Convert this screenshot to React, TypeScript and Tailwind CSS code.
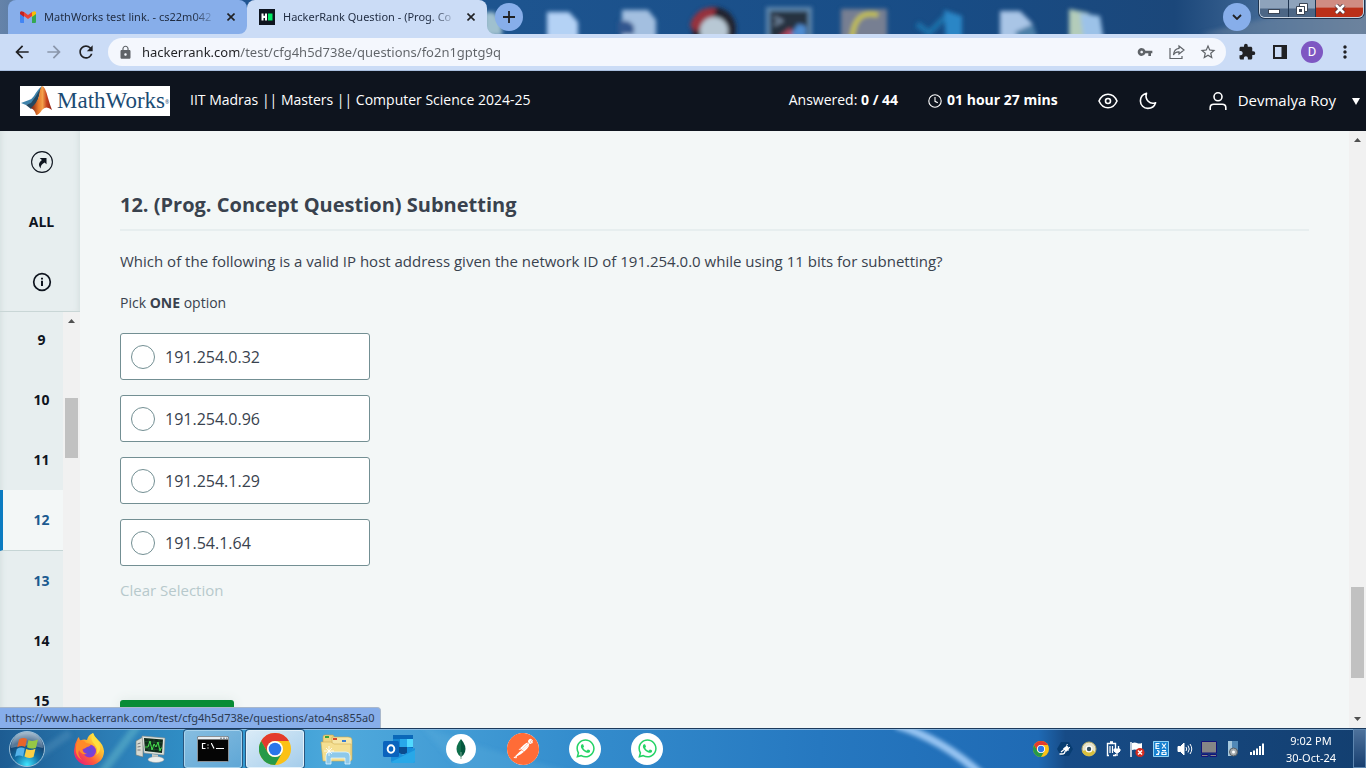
import React from "react";
import { MdVpnKey, MdStarBorder, MdExtension, MdLock, MdArrowBack, MdArrowForward, MdRefresh, MdMoreVert } from "react-icons/md";
import { SiPostman } from "react-icons/si";
import { FaWhatsapp } from "react-icons/fa";

function GmailIcon() {
  return (
    <svg viewBox="0 0 16 12" className="h-3 w-4 shrink-0">
      <path d="M1 12h3V5L0 2v9a1 1 0 0 0 1 1z" fill="#4285f4" />
      <path d="M12 12h3a1 1 0 0 0 1-1V2l-4 3z" fill="#34a853" />
      <path d="M4 5l4 3 4-3V1L8 4 4 1z" fill="#ea4335" />
      <path d="M0 2v1l4 3V1L2.4.4A1.6 1.6 0 0 0 0 2z" fill="#c5221f" />
      <path d="M16 2v1l-4 3V1l1.600-.6A1.600 1.600 0 0 1 16 2z" fill="#fbbc04" />
    </svg>
  );
}

function HackerRankIcon() {
  return (
    <svg viewBox="0 0 16 16" className="h-4 w-4 shrink-0">
      <rect width="16" height="16" fill="#0e141e" />
      <path d="M2.500 4.500h2v2.300h1.500V4.500h2v7H6V8.900H4.500v2.600h-2z" fill="#fff" />
      <rect x="9" y="4.500" width="4.500" height="7" fill="#00ea64" />
    </svg>
  );
}

function TabClose() {
  return (
    <svg viewBox="0 0 8 8" className="h-2 w-2">
      <path d="M.5.5l7 7M7.500.5l-7 7" stroke="#202124" strokeWidth="1.600" />
    </svg>
  );
}

function DesktopBackdrop() {
  return (
    <svg className="absolute inset-0 h-full w-full" viewBox="0 0 1366 34" preserveAspectRatio="none">
      <defs>
        <linearGradient id="sky">
          <stop offset="0" stopColor="#6583a9" />
          <stop offset=".1" stopColor="#215490" />
          <stop offset=".38" stopColor="#1d548f" />
          <stop offset=".7" stopColor="#184c85" />
          <stop offset=".86" stopColor="#1b477a" />
          <stop offset=".93" stopColor="#436a97" />
          <stop offset="1" stopColor="#687f9c" />
        </linearGradient>
        <filter id="soft" x="-20%" y="-20%" width="140%" height="140%">
          <feGaussianBlur stdDeviation="2" />
        </filter>
      </defs>
      <rect width="1366" height="34" fill="url(#sky)" />
      <g filter="url(#soft)">
        <path d="M484 12h10l8 10v14h-18z" fill="#9fc0cf" />
        <path d="M547 12h22l9 10v18h-31z" fill="#b4d2f5" />
        <path d="M622 10h26l8 10v20h-34z" fill="#a3bfe0" />
        <path d="M618 22q10-4 16 4v8h-16z" fill="#30578f" />
        <circle cx="714" cy="29" r="22" fill="#20242e" />
        <path d="M690 26a22 22 0 0 1 26-18l-2 8-18 16z" fill="#96303e" />
        <circle cx="714" cy="31" r="14" fill="#b8c8d4" />
        <rect x="766" y="7" width="46" height="36" fill="#5f88ae" />
        <rect x="770" y="11" width="38" height="32" fill="#28323f" />
        <path d="M774 17l8 4-8 4" stroke="#7d93ad" strokeWidth="2" fill="none" />
        <path d="M778 38l12-10 6 10z" fill="#b04a60" />
        <path d="M790 36l8-12 8 2v12z" fill="#4e8bd0" />
        <rect x="841" y="9" width="46" height="34" fill="#777f92" />
        <path d="M878 15q-24-6-26 24" stroke="#c4c04e" strokeWidth="5" fill="none" />
        <path d="M917 24l12 9 16-16" stroke="#1c70a8" strokeWidth="6" fill="none" />
        <path d="M944 10l18 6v26h-16z" fill="#2a86c6" />
        <path d="M1000 11h20l12 12v20h-32z" fill="#a9c5e6" />
        <path d="M1015 32l18-8 6 18h-20z" fill="#4b7fa8" />
        <path d="M1069 9l20 4v30h-20z" fill="#b3ccba" />
        <path d="M1080 13l20 3 4 26h-20z" fill="#9cc2e8" />
        <path d="M1200 34l166-40v50z" fill="#71879f" opacity=".5" />
      </g>
    </svg>
  );
}

function WindowControls() {
  return (
    <div className="relative mr-0.5 ml-2 flex h-[18px] overflow-hidden rounded-b-md border border-t-0 border-[#c8d3e0] shadow-[0_0_0_1px_#1f3550]">
      <button aria-label="Minimize" className="flex w-[29px] items-center justify-center border-r border-[#1f3550] bg-linear-to-b from-[#8ea3bb] from-45% to-[#4c6685] to-55%">
        <svg viewBox="0 0 12 10" className="h-2.5 w-3"><rect x=".5" y="5.500" width="11" height="4" fill="#fff" stroke="#3b4656" /></svg>
      </button>
      <button aria-label="Restore" className="flex w-[27px] items-center justify-center border-r border-[#1f3550] bg-linear-to-b from-[#8ea3bb] from-45% to-[#4c6685] to-55%">
        <svg viewBox="0 0 12 12" className="h-3 w-3">
          <path d="M3.500.5h8v8h-3v-5h-5z" fill="#fff" stroke="#3b4656" />
          <path d="M.5 3.500h8v8h-8z" fill="#fff" stroke="#3b4656" />
          <rect x="3" y="6" width="3" height="3" fill="#3b4656" />
        </svg>
      </button>
      <button aria-label="Close" className="flex w-[47px] items-center justify-center bg-linear-to-b from-[#d08c82] from-40% to-[#bb3019] to-50%">
        <svg viewBox="0 0 12 10" className="h-2.5 w-3">
          <path d="M2 1l8 8M10 1L2 9" stroke="#4a3038" strokeWidth="4.200" />
          <path d="M2 1l8 8M10 1L2 9" stroke="#fff" strokeWidth="2.600" />
        </svg>
      </button>
    </div>
  );
}

function TabStrip() {
  return (
    <div className="relative flex h-[34px] shrink-0 items-start overflow-hidden font-['Noto_Sans',sans-serif]">
      <DesktopBackdrop />
      <div className="relative ml-2 flex h-[34px] w-[239px] items-center rounded-t-lg bg-[#87aeea] pr-2.5 pl-3 text-[11px] text-[#1f2b40]">
        <GmailIcon />
        <span className="ml-2 flex-1 whitespace-nowrap [mask-image:linear-gradient(to_right,#000_86%,transparent)]">MathWorks test link. - cs22m042</span>
        <button aria-label="Close tab" className="ml-2 p-0.5"><TabClose /></button>
      </div>
      <div className="relative flex h-[34px] w-[240px] items-center rounded-t-lg bg-[#cbdcf6] pr-2.5 pl-3 text-[11px] text-[#1f2b40]">
        <HackerRankIcon />
        <span className="ml-2 flex-1 whitespace-nowrap [mask-image:linear-gradient(to_right,#000_86%,transparent)]">HackerRank Question - (Prog. Co</span>
        <button aria-label="Close tab" className="ml-2 p-0.5"><TabClose /></button>
        <svg viewBox="0 0 8 8" className="absolute bottom-0 left-full h-2 w-2"><path d="M0 0a8 8 0 0 0 8 8H0z" fill="#cbdcf6" /></svg>
        <svg viewBox="0 0 8 8" className="absolute right-full bottom-0 h-2 w-2"><path d="M8 0a8 8 0 0 1-8 8h8z" fill="#cbdcf6" /></svg>
      </div>
      <button aria-label="New tab" className="relative mt-[3px] ml-2 flex h-7 w-7 items-center justify-center rounded-full bg-[#87aeea]">
        <svg viewBox="0 0 12 12" className="h-3 w-3"><path d="M6 0v12M0 6h12" stroke="#202124" strokeWidth="1.800" /></svg>
      </button>
      <button aria-label="Search tabs" className="relative mt-[3px] ml-auto flex h-7 w-7 items-center justify-center rounded-full bg-[#87aeea]">
        <svg viewBox="0 0 10 6" className="h-1.5 w-2.5"><path d="M1 1l4 4 4-4" fill="none" stroke="#202124" strokeWidth="1.800" /></svg>
      </button>
      <WindowControls />
    </div>
  );
}

function Toolbar() {
  return (
    <div className="flex h-[37px] shrink-0 items-center border-b border-[#a9bfdf] bg-[#cbdcf6] pr-[11px] pl-3 text-[#202124]">
      <button aria-label="Back"><MdArrowBack size={20} /></button>
      <button aria-label="Forward" className="ml-3 text-[#8a96aa]"><MdArrowForward size={20} /></button>
      <button aria-label="Reload" className="ml-3"><MdRefresh size={20} /></button>
      <div className="ml-3 flex h-7 flex-1 items-center rounded-full bg-[#f4f7fd] pr-[9px] pl-2.5 text-[#5f6368]">
        <MdLock size={15} />
        <input
          aria-label="Address"
          readOnly
          value="hackerrank.com/test/cfg4h5d738e/questions/fo2n1gptg9q"
          className="ml-[9px] flex-1 bg-[linear-gradient(to_right,#202124_97px,#5f6368_97px)] bg-clip-text font-['Noto_Sans',sans-serif] text-[13px] leading-5 text-transparent outline-none"
        />
        <button aria-label="Passwords"><MdVpnKey size={16} /></button>
        <button aria-label="Share" className="ml-4">
          <svg viewBox="0 0 16 16" className="h-4 w-4" fill="none" stroke="#5f6368" strokeWidth="1.200">
            <path d="M1 4v10.500h12V12" />
            <path d="M10 2l5 4-5 4V7.800Q6 7.600 4.500 11 5 5 10 4.400z" />
          </svg>
        </button>
        <button aria-label="Bookmark" className="ml-3.5"><MdStarBorder size={18} /></button>
      </div>
      <button aria-label="Extensions" className="ml-3"><MdExtension size={18} /></button>
      <button aria-label="Side panel" className="ml-[17px]">
        <svg viewBox="0 0 14 14" className="h-3.5 w-3.5"><path d="M0 0h14v14H0zM2 2v10h6.500V2z" fillRule="evenodd" fill="#202124" /></svg>
      </button>
      <button aria-label="Profile" className="ml-3.5 h-[22px] w-[22px] rounded-full bg-[#7e57c2] text-center font-[Roboto,sans-serif] text-[13px] leading-[22px] text-white">D</button>
      <button aria-label="Menu" className="ml-3"><MdMoreVert size={20} /></button>
    </div>
  );
}

function MathWorksLogo() {
  return (
    <div className="flex h-[30px] w-[150px] items-center overflow-hidden bg-white">
      <svg viewBox="0 0 34 30" className="h-[30px] w-[34px] shrink-0">
        <defs>
          <linearGradient id="membrane" x1="0" x2="1">
            <stop offset="0" stopColor="#7b1f12" />
            <stop offset=".35" stopColor="#e87a2c" />
            <stop offset=".55" stopColor="#f3a04a" />
            <stop offset=".75" stopColor="#c5411d" />
            <stop offset="1" stopColor="#8b2416" />
          </linearGradient>
        </defs>
        <path d="M1 17l8-3q3-1 5-4 4-7 8-10-3 9-11 19-2-1-5 0z" fill="#3f83ab" />
        <path d="M6 19l5-2 5-7 6-10-5 17-6 6z" fill="#24475f" />
        <path d="M22 0q3 0 6 12 2 7 4 12-6-5-10 0-3 5-6 5-1-5-5-7 6-5 8-12 1-8 3-10z" fill="url(#membrane)" />
      </svg>
      <span className="ml-[3px] font-['Liberation_Serif',serif] text-[23px] leading-[30px] text-[#1b4b73]">MathWorks</span>
      <span className="self-start pt-1.5 text-[5px] text-[#1b4b73]">®</span>
    </div>
  );
}

function TestHeader() {
  return (
    <header className="flex h-[60px] shrink-0 items-center bg-[#0e141e] pr-1.5 pl-5 text-[14px] leading-5 whitespace-nowrap text-white">
      <MathWorksLogo />
      <h1 className="ml-5 pb-0.5">IIT Madras || Masters || Computer Science 2024-25</h1>
      <p className="ml-auto pb-0.5">Answered: <b>0 / 44</b></p>
      <svg viewBox="0 0 14 14" className="ml-[30px] h-3.5 w-3.5" fill="none" stroke="#fff" strokeWidth="1.100">
        <circle cx="7" cy="7" r="6.200" /><path d="M7 3v4.300l2.800 1.500" />
      </svg>
      <b className="ml-[5px] pb-0.5">01 hour 27 mins</b>
      <button aria-label="Preview" className="ml-10">
        <svg viewBox="0 0 20 16" className="h-4 w-5" fill="none" stroke="#fff" strokeWidth="1.600">
          <path d="M1 8Q4 1.200 10 1.200T19 8q-3 6.800-9 6.800T1 8z" /><circle cx="10" cy="8" r="2.500" />
        </svg>
      </button>
      <button aria-label="Dark mode" className="ml-[21px]">
        <svg viewBox="0 0 18 18" className="h-[18px] w-[18px]" fill="none" stroke="#fff" strokeWidth="1.600" strokeLinejoin="round">
          <path d="M7.500 1.300C4.400 2.200 1.400 5 1.400 9c0 4.200 3.400 7.400 7.400 7.400 3.700 0 6.800-2.500 7.800-5.700-5.800 2.300-11-3-9.100-9.400z" />
        </svg>
      </button>
      <button className="ml-[52px] flex items-center text-[15px]">
        <svg viewBox="0 0 18 20" className="h-5 w-[18px]" fill="none" stroke="#fff" strokeWidth="1.600">
          <circle cx="9" cy="5.800" r="4" /><path d="M1.200 19v-2.500q0-3.300 3.600-3.300h8.400q3.600 0 3.600 3.300V19" />
        </svg>
        <span className="ml-[11px] pb-0.5">Devmalya Roy</span>
        <svg viewBox="0 0 8 7" className="ml-4 h-[7px] w-2"><path d="M0 0h8L4 7z" fill="#fff" /></svg>
      </button>
    </header>
  );
}

const questions = [9, 10, 11, 12, 13, 14, 15];

function questionClass(n: number) {
  const base = "flex shrink-0 items-center justify-center pb-0.5";
  if (n === 12) return base + " h-[61px] border-b border-l-[3px] border-b-[#c6d5d5] border-l-[#0b7bc1] bg-[#f3f7f7] pl-[17px] text-[#1b5a90]";
  if (n === 13) return base + " h-[60px] pl-5 text-[#1b5a90]";
  return base + " h-[60px] pl-5";
}

function Sidebar() {
  return (
    <nav className="flex w-20 shrink-0 flex-col bg-[#e7eeef] text-[14px] font-bold text-[#0e141e] shadow-[inset_6px_0_6px_-5px_#d3dddd]">
      <div className="flex h-[181px] shrink-0 flex-col border-b border-[#c9d6d6] pl-[3px] shadow-[inset_-6px_0_6px_-5px_#d3dddd]">
        <button aria-label="Go to test" className="flex h-[61px] items-center justify-center">
          <svg viewBox="0 0 22 22" className="h-[22px] w-[22px]">
            <circle cx="11" cy="11" r="10.400" fill="none" stroke="#0e141e" strokeWidth="1.100" />
            <path d="M8.700 7H15.500v6.300l-1.900-1.700q-4.200 2-4 6-3.900-5 1.300-8.700z" fill="#0e141e" />
          </svg>
        </button>
        <button className="flex-1 pb-0.5">ALL</button>
        <button aria-label="Instructions" className="flex flex-1 items-center justify-center">
          <svg viewBox="0 0 20 20" className="h-5 w-5">
            <circle cx="10" cy="10" r="8.300" fill="none" stroke="#0e141e" strokeWidth="1.700" />
            <path d="M9 5.800h2v1.700H9zM9 8.800h2v5.200H9z" fill="#0e141e" />
          </svg>
        </button>
      </div>
      <div className="flex min-h-0 flex-1">
        <div className="min-w-0 flex-1 overflow-hidden">
          <div className="-mt-0.5 flex flex-col">
            {questions.map((n) => (
              <a key={n} href={"#question-" + n} className={questionClass(n)}>{n}</a>
            ))}
          </div>
        </div>
        <div className="flex w-[17px] flex-col items-center bg-[#f1f1f1]">
          <svg viewBox="0 0 7 4" className="mt-[7px] h-1 w-[7px]"><path d="M0 4L3.500 0 7 4z" fill="#505050" /></svg>
          <div className="mt-[75px] h-[60px] w-[13px] bg-[#c1c1c1]" />
        </div>
      </div>
    </nav>
  );
}

const options = ["191.254.0.32", "191.254.0.96", "191.254.1.29", "191.54.1.64"];

function Question() {
  return (
    <main className="min-w-0 flex-1 overflow-hidden bg-[#f3f7f7] px-10 text-[#39424e]">
      <h2 className="mt-[59px] border-b-2 border-[#e7eeef] pb-[9px] text-[20px] leading-[30px] font-bold">12. (Prog. Concept Question) Subnetting</h2>
      <p className="mt-[18px] text-[15px] leading-6">Which of the following is a valid IP host address given the network ID of 191.254.0.0 while using 11 bits for subnetting?</p>
      <p className="mt-5 text-[14px] leading-5">Pick <b>ONE</b> option</p>
      <div role="radiogroup" aria-label="Options" className="mt-5 flex w-[250px] flex-col gap-[15px]">
        {options.map((o) => (
          <label key={o} className="flex h-[47px] items-center rounded-[3px] border border-[#738f93] bg-white pl-2.5 text-[16px]">
            <input type="radio" name="answer" className="mr-2.5 h-6 w-6 appearance-none rounded-full border border-[#738f93] bg-white" />
            {o}
          </label>
        ))}
      </div>
      <button className="mt-3 block text-[15px] leading-6 text-[#b7c9cc]">Clear Selection</button>
      <button aria-label="Continue" className="mt-[98px] block h-10 w-[114px] rounded-[3px] bg-[#078c35] shadow-[0_0_12px_#dfe9e6]" />
    </main>
  );
}

function PageScrollbar() {
  return (
    <div className="flex w-[17px] shrink-0 flex-col items-center bg-[#f1f1f1]">
      <svg viewBox="0 0 7 4" className="mt-[7px] h-1 w-[7px]"><path d="M0 4L3.500 0 7 4z" fill="#505050" /></svg>
      <div className="mt-auto mb-[39px] h-[91px] w-[13px] bg-[#c1c1c1]" />
      <svg viewBox="0 0 7 4" className="mb-[7px] h-1 w-[7px]"><path d="M0 0L3.500 4 7 0z" fill="#505050" /></svg>
    </div>
  );
}

function ChromeIcon({ className }: { className: string }) {
  return (
    <svg viewBox="0 0 32 32" className={className}>
      <circle cx="16" cy="16" r="16" fill="#fbc116" />
      <path d="M2.140 8A16 16 0 0 1 29.860 8H16a8 8 0 0 0-6.930 12z" fill="#e33b2e" />
      <path d="M2.140 8A16 16 0 0 0 16 32l6.930-12A8 8 0 0 1 9.070 20z" fill="#269a48" />
      <circle cx="16" cy="16" r="8" fill="#fff" />
      <circle cx="16" cy="16" r="6.300" fill="#2b76ea" />
    </svg>
  );
}

function StartOrb() {
  return (
    <svg viewBox="0 0 38 38" className="h-[38px] w-[38px]">
      <defs>
        <radialGradient id="orb" cx=".5" cy=".95" r=".9">
          <stop offset="0" stopColor="#3fe6ff" />
          <stop offset=".4" stopColor="#126fa5" />
          <stop offset=".75" stopColor="#15426f" />
          <stop offset="1" stopColor="#7c9bb5" />
        </radialGradient>
      </defs>
      <circle cx="19" cy="19" r="17.500" fill="url(#orb)" stroke="#9dc0d8" strokeWidth="1" />
      <path d="M3 18a16 16 0 0 1 32 0q-16-5-32 0z" fill="#fff" opacity=".28" />
      <path d="M11 9.500q4-2.500 8-.5l-1.800 8q-4-2-8 .3z" fill="#e8652b" />
      <path d="M20.500 10q4 2 9.500-.5l-2 8.200q-5 2-9-.5z" fill="#96c846" />
      <path d="M8.800 19q4-2.500 8-.5l-1.800 8q-4-2-8 .3z" fill="#55b3ea" />
      <path d="M18.200 19q4 2.200 9.300-.2l-2 8.200q-5 2-9-.5z" fill="#fbd046" />
    </svg>
  );
}

function FirefoxIcon() {
  return (
    <svg viewBox="0 0 32 32" className="h-8 w-8">
      <defs>
        <linearGradient id="fox" x1=".9" y1=".1" x2=".2" y2=".9">
          <stop offset="0" stopColor="#fff04a" />
          <stop offset=".4" stopColor="#ffb02e" />
          <stop offset=".7" stopColor="#ff5b3b" />
          <stop offset="1" stopColor="#e8286f" />
        </linearGradient>
        <radialGradient id="globe"><stop offset="0" stopColor="#5a50d8" /><stop offset="1" stopColor="#8a39d3" /></radialGradient>
      </defs>
      <path d="M20 0q1 4 5 7 5 4 6 11a15 14 0 1 1-29.500-3Q2 10 4 7q.5-2 2-3 0 2 1.500 3.500Q11 6 14 7q1-5 6-7z" fill="url(#fox)" />
      <circle cx="16.500" cy="18" r="6.500" fill="url(#globe)" />
      <path d="M4 9q6-4 9 1l5 1q0 2-4 3-2 2-5 2 1 4 5 5-6 1-8-4-2 5 3 10Q0 22 4 9z" fill="#ff8a2a" />
      <path d="M20 0q-4 6 2 12 4 5 1 10 5-3 4-9 0-4-3-7-3-3-4-6z" fill="#ffdf3e" />
    </svg>
  );
}

function MonitorIcon() {
  return (
    <svg viewBox="0 0 32 30" className="h-[30px] w-8">
      <path d="M1 7l7-4v20l-7-2z" fill="#d6d9d2" stroke="#74786f" strokeWidth=".6" />
      <path d="M2.500 10l3-1M2.500 13l3-.5M2.500 16h3" stroke="#777" />
      <path d="M7 2l23 2-1 17-20-2z" fill="#dfe3de" stroke="#868b84" strokeWidth=".6" />
      <path d="M9 4l19 1.500-1 13.500-17-2z" fill="#10291a" />
      <path d="M10 7.500l17 1.300M10 11l17 1.300M10 14.500l16.500 1.500M14 4.500v13M19 5v13M24 5v14" stroke="#2b6638" strokeWidth=".5" />
      <path d="M10 13h3l2-6 2 9 2-6 2 3 2-5 2 9 1-3h1" stroke="#45e04c" strokeWidth="1" fill="none" />
      <path d="M17 20l6 1v3h-6z" fill="#c7cbc5" />
      <ellipse cx="21" cy="25.500" rx="8" ry="3" fill="#eceeeb" stroke="#999" strokeWidth=".5" />
    </svg>
  );
}

function ConsoleIcon() {
  return (
    <svg viewBox="0 0 32 26" className="h-[26px] w-8">
      <rect x=".5" y=".5" width="31" height="25" rx="1" fill="#050505" stroke="#8b9196" />
      <path d="M1 1h30v2.500H1z" fill="#e9eef2" />
      <path d="M23 2.200h2m1 0h2m1 0h1.500" stroke="#687582" />
      <path d="M8.500 7.500h-3v5h3M11 8.500v1m0 2v1M14 7.500h.5l2.500 5M19 12.500h8" stroke="#fff" strokeWidth="1.200" fill="none" />
    </svg>
  );
}

function FolderIcon() {
  return (
    <svg viewBox="0 0 34 32" className="h-8 w-[34px]">
      <path d="M3 4q0-2 2-2h8l2 3h14v20H3z" fill="#efd583" stroke="#c5a348" strokeWidth=".6" />
      <path d="M12 4h16q4 0 4 3v20H12z" fill="#f6e6a6" stroke="#c9a84f" strokeWidth=".6" />
      <path d="M5 3h4v2H5z" fill="#38a43b" /><path d="M13 5h4v2h-4z" fill="#d74a2d" /><path d="M22 7h4v2h-4z" fill="#3c7ed2" />
      <path d="M1 9h10l3 2h17v17H3z" fill="#f5df91" stroke="#d1b056" strokeWidth=".6" />
      <path d="M6 31v-8q0-4 4-4h16q4 0 4 4v8h-5v-6H11v6z" fill="#8ec9ea" stroke="#e0f5ff" strokeWidth=".8" />
      <path d="M9 13v10M4 18h10M6 15l6 6M12 15l-6 6" stroke="#fff" strokeWidth=".8" />
    </svg>
  );
}

function OutlookIcon() {
  return (
    <svg viewBox="0 0 32 30" className="h-[30px] w-8">
      <path d="M10 1h20v14H10z" fill="#0b68b8" />
      <path d="M10 5h7v8h-7z" fill="#1487d4" /><path d="M17 5h7v8h-7z" fill="#28a8ea" /><path d="M24 5h6v8h-6z" fill="#50d9ff" />
      <path d="M10 13h14v7H10z" fill="#0a4c8f" /><path d="M24 13l7 1-7 7z" fill="#1490df" />
      <path d="M8 14l12 7 12-7v13q0 2-2 2H10q-2 0-2-2z" fill="#1a91dc" />
      <path d="M8 28l24-12v11q0 2-2 2H10z" fill="#28a8e8" />
      <rect y="7" width="16" height="16" rx="1.500" fill="#0b63bd" />
      <ellipse cx="8" cy="15" rx="3.300" ry="3.800" fill="none" stroke="#fff" strokeWidth="2" />
    </svg>
  );
}

function MongoIcon() {
  return (
    <svg viewBox="0 0 30 30" className="h-[30px] w-[30px]">
      <circle cx="15" cy="15" r="15" fill="#fff" />
      <path d="M15 5q-6 7-4 13 1 3 4 5z" fill="#0f6f4c" />
      <path d="M15 5q6 7 4 13-1 3-4 5z" fill="#05583f" />
      <path d="M14.500 18h1v7h-1z" fill="#7ba894" />
    </svg>
  );
}

function WhatsAppTile() {
  return (
    <span className="flex h-8 w-8 items-center justify-center rounded-full bg-white text-[#25d366]">
      <FaWhatsapp size={21} />
    </span>
  );
}

function TaskButton({ label, framed, children }: { label: string; framed?: "dim" | "lit"; children: React.ReactNode }) {
  const frame =
    framed === "lit"
      ? "rounded-[3px] border border-[#e3f1fa] bg-linear-to-br from-[#d9ebf7] to-[#a5cdeb] shadow-[0_0_0_1px_#29567f]"
      : framed === "dim"
        ? "rounded-[3px] border border-[#a8d3ed] bg-linear-to-br from-[#86bde0] to-[#5fa7d6] shadow-[0_0_0_1px_#29567f]"
        : "";
  return (
    <button aria-label={label} className={"mx-[2px] flex h-[38px] w-[58px] items-center justify-center " + frame}>{children}</button>
  );
}

function TrayIcons() {
  const box = "h-4 w-4";
  return (
    <div className="flex items-center gap-2">
      <ChromeIcon className="h-4 w-4" />
      <svg viewBox="0 0 16 16" className={box}><path d="M4 1h8l4 7-4 7H4L0 8z" fill="#083d72" /><path d="M2.500 13h3M5 13q3 0 3-3M4 11l5-4M8.500 6.500l3 3" stroke="#fff" strokeWidth="1.300" fill="none" /><path d="M6 7.500l4-3 2.500 3-3.500 3.500z" fill="#fff" /><path d="M9.500 4.500l1-1.500M12 7l1-1" stroke="#fff" /></svg>
      <svg viewBox="0 0 16 16" className={box}><circle cx="8" cy="8" r="7" fill="#e7e3cb" stroke="#b7aa62" /><path d="M1 10a7 7 0 0 0 13 1l-4-3z" fill="#d9bf3d" /><circle cx="8" cy="8" r="3.500" fill="#fff" /><circle cx="8" cy="8" r="2.200" fill="#345060" /></svg>
      <svg viewBox="0 0 16 16" className={box} fill="none" stroke="#fff"><path d="M4 14.500H2.500v-12h8V5M8 14.500h2.500V13" strokeWidth="1.400" /><path d="M5 1.200h3" strokeWidth="2" /><path d="M5 5v7M7.500 5v7" strokeWidth="1.200" /><path d="M9 8h6v2l-1.500 1.500h-3L9 10z" fill="#fff" /><path d="M10.500 8V5M13.500 8V5M12 11v4" strokeWidth="1.300" /></svg>
      <svg viewBox="0 0 16 16" className={box}><path d="M2 1v15" stroke="#fff" strokeWidth="1.400" /><path d="M3 2q3-1 5 0t5 0v7q-3 1-5 0t-5 0z" fill="#fff" /><circle cx="11" cy="11.500" r="4.500" fill="#d52b1e" /><path d="M9 9.500l4 4m0-4l-4 4" stroke="#fff" strokeWidth="1.500" /></svg>
      <svg viewBox="0 0 16 16" className={box}><rect width="16" height="16" fill="#1681d0" /><path d="M.5.5h15v15H.5z" fill="none" stroke="#8fd2f4" /><path d="M6.500 2.500H3v5h3.500M3 5h3M9 2.500l4 5M13 2.500l-4 5M4 9.500q2.500 0 2 2t-3 2h3M9 9.500h4M9 11.500q3-1 4 0v2H9z" stroke="#fff" strokeWidth="1.200" fill="none" /></svg>
      <svg viewBox="0 0 16 16" className={box} fill="none" stroke="#fff"><path d="M1 5.500h2.500L7 2v12l-3.500-3.500H1z" fill="#fff" /><path d="M9 6q1.500 2 0 4M11 4.500q2.500 3.500 0 7M13 3q3.500 5 0 10" /></svg>
      <svg viewBox="0 0 16 16" className={box}><path d="M.5.5h15v11.500H.5z" fill="#868686" stroke="#14147a" /><path d="M.5 13.500h6.500v2H.5zM9 13.500h6.500v2H9z" fill="#868686" stroke="#14147a" /></svg>
      <svg viewBox="0 0 16 16" className={box}><path d="M3 0h10v9H3z" fill="#5289b7" /><path d="M3 0h4v15H3z" fill="#a7c8dd" /><circle cx="8.500" cy="11" r="4" fill="#a5aaad" stroke="#5b6064" /><circle cx="8.500" cy="11" r="1.500" fill="#fff" /></svg>
      <svg viewBox="0 0 16 16" className={box} fill="#fff"><path d="M1 11h2v3H1zM4 9.500h2V14H4zM7 7.500h2V14H7zM10 5h2v9h-2zM13 2.500h2V14h-2z" /></svg>
    </div>
  );
}

function Taskbar() {
  return (
    <footer className="relative flex h-10 shrink-0 items-center overflow-hidden border-t border-[#1c3a5c] bg-[linear-gradient(to_right,#1d5c92_0%,#2c7db5_8%,#339bd2_18%,#4fa9dc_25%,#348dcd_42%,#2678c0_60%,#1f6ab4_76%,#174b86_78%,#133f70_100%)] font-['Noto_Sans',sans-serif]">
      <svg className="absolute inset-0 h-full w-full" viewBox="0 0 1366 39" preserveAspectRatio="none">
        <defs><filter id="glow" x="-20%" y="-50%" width="140%" height="200%"><feGaussianBlur stdDeviation="2" /></filter></defs>
        <g filter="url(#glow)">
          <path d="M896-4q46 14 86 50" stroke="#98c5f2" strokeWidth="8" fill="none" />
          <path d="M100 46l38-50" stroke="#67bccd" strokeWidth="8" opacity=".5" />
          <path d="M10 46l60-42" stroke="#5b96bd" strokeWidth="8" opacity=".4" />
          <path d="M420-4q60 24 150 46H460z" fill="#62b3e0" opacity=".25" />
        </g>
        <path d="M0 .5h1366" stroke="#9cc4e6" opacity=".8" />
      </svg>
      <div className="relative flex w-full items-center">
        <button aria-label="Start" className="mr-1 flex w-[54px] justify-center"><StartOrb /></button>
        <TaskButton label="Firefox"><FirefoxIcon /></TaskButton>
        <TaskButton label="Resource Monitor"><MonitorIcon /></TaskButton>
        <TaskButton label="Command Prompt" framed="dim"><ConsoleIcon /></TaskButton>
        <TaskButton label="Google Chrome" framed="lit"><ChromeIcon className="h-8 w-8" /></TaskButton>
        <TaskButton label="File Explorer"><FolderIcon /></TaskButton>
        <TaskButton label="Outlook"><OutlookIcon /></TaskButton>
        <TaskButton label="MongoDB Compass"><MongoIcon /></TaskButton>
        <TaskButton label="Postman">
          <span className="rounded-full bg-white text-[#ff6c37]"><SiPostman size={32} /></span>
        </TaskButton>
        <TaskButton label="WhatsApp"><WhatsAppTile /></TaskButton>
        <TaskButton label="WhatsApp"><WhatsAppTile /></TaskButton>
        <div className="mr-3.5 ml-auto flex items-center gap-[18px]">
          <TrayIcons />
          <p className="w-[56px] text-center text-[11px] leading-[17px] whitespace-nowrap text-white">9:02 PM<br />30-Oct-24</p>
        </div>
        <button aria-label="Show desktop" className="h-[39px] w-[13px] border border-[#5d86b0] bg-linear-to-b from-[#4d719b] to-[#173f70]" />
      </div>
    </footer>
  );
}

export default function App() {
  return (
    <div className="flex h-screen flex-col overflow-hidden font-['Open_Sans','Noto_Sans',sans-serif]">
      <TabStrip />
      <Toolbar />
      <TestHeader />
      <div className="relative flex min-h-0 flex-1">
        <Sidebar />
        <Question />
        <PageScrollbar />
        <div className="absolute bottom-0 left-0 h-[21px] rounded-tr border-t border-r border-[#a9b8cc] bg-[#87aeea] pr-1.5 pl-[5px] font-['Noto_Sans',sans-serif] text-[11px] leading-5 text-[#2b3950]">
          https://www.hackerrank.com/test/cfg4h5d738e/questions/ato4ns855a0
        </div>
      </div>
      <Taskbar />
    </div>
  );
}
